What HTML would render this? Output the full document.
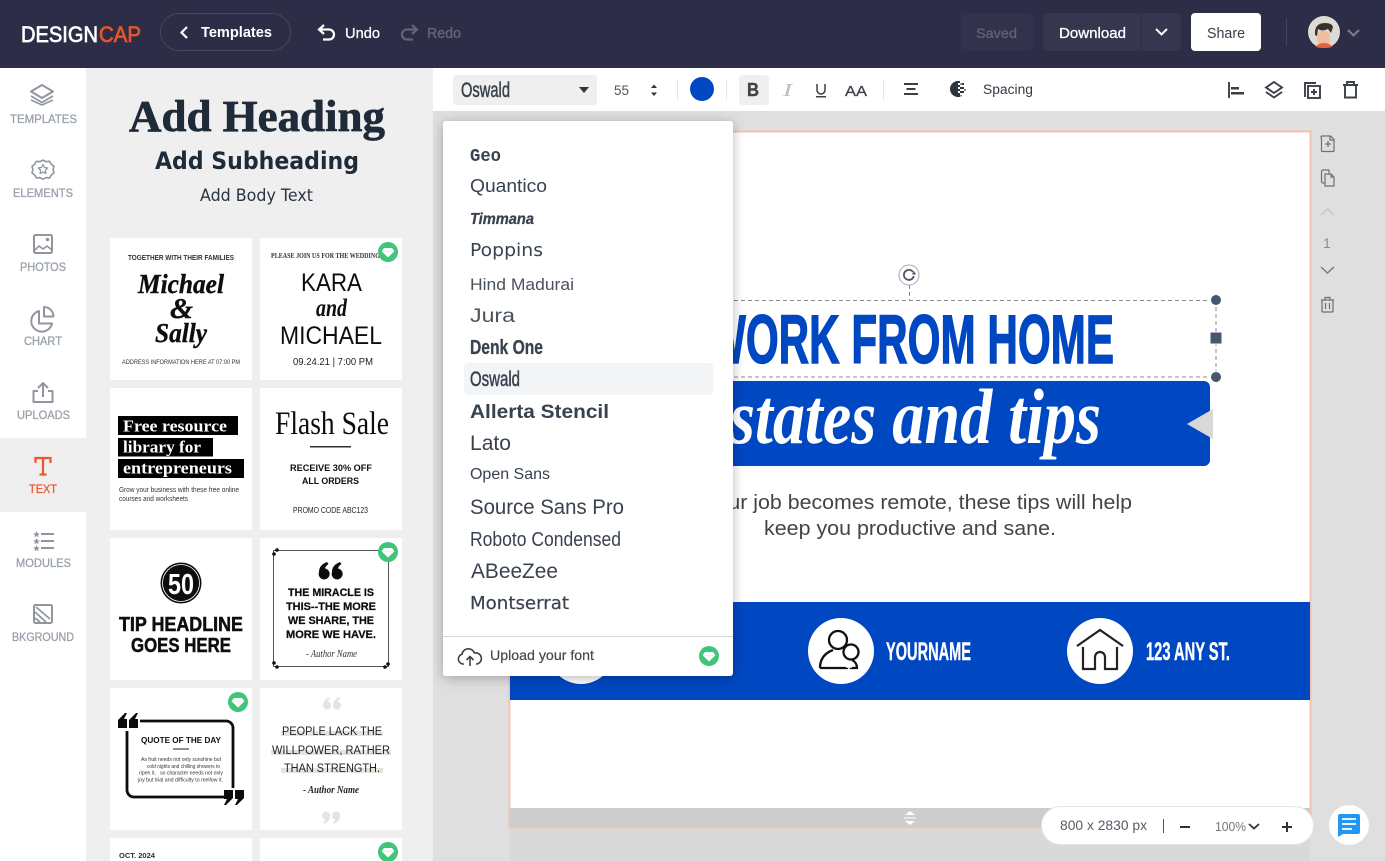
<!DOCTYPE html>
<html lang="en"><head><meta charset="utf-8"><title>DesignCap</title>
<style>
html,body{margin:0;padding:0;width:1385px;height:861px;overflow:hidden;background:#dfdfdf}
svg{display:block}
text{font-family:"Liberation Sans",sans-serif;white-space:pre}
.se{font-family:"Liberation Serif",serif}
.dj{font-family:"DejaVu Sans",sans-serif}
.mo{font-family:"Liberation Mono",monospace}
.nav{font-size:12px;fill:#99a1ab;stroke:#99a1ab;stroke-width:.3}
.hd{stroke-width:.3}
.ni{fill:none;stroke:#91969e;stroke-width:2;stroke-linejoin:round}
.ti{fill:none;stroke:#3b3f47;stroke-width:1.900}
.si{fill:none;stroke:#6d7078;stroke-width:1.200}
.f{fill:#39424f}
</style></head><body>
<svg width="1385" height="861" viewBox="0 0 1385 861" xmlns="http://www.w3.org/2000/svg">
<defs>
<filter id="sh" x="-10%" y="-10%" width="120%" height="120%"><feDropShadow dx="0" dy="2" stdDeviation="6" flood-color="#000" flood-opacity=".28"/></filter>
<filter id="bl" x="0" y="0" width="100%" height="100%"><feGaussianBlur stdDeviation=".3"/></filter>
<g id="gem"><circle r="10" fill="#3fc57a"/><path d="M-4-4H4L6.500-.8 0 5.500-6.500-.8Z" fill="#fff"/><path d="M-6-.8H6" stroke="#c5eed7" stroke-width=".6"/></g>
</defs>

<!-- workspace -->
<rect x="433" y="111" width="952" height="750" fill="#dfdfdf"/>
<rect x="510" y="827" width="800" height="34" fill="#d9d9d9"/>

<!-- header -->
<rect width="1385" height="68" fill="#2e2d47"/>
<text x="21" y="42" font-size="22" fill="#fff" stroke="#fff" stroke-width=".7" textLength="77" lengthAdjust="spacingAndGlyphs">DESIGN</text>
<text x="99" y="42" font-size="22" fill="#e9552b" stroke="#e9552b" stroke-width=".7" textLength="42" lengthAdjust="spacingAndGlyphs">CAP</text>
<rect x="160.500" y="13.500" width="130" height="37" rx="18.500" fill="none" stroke="#47475f"/>
<path d="M187 27l-5.500 5.500 5.500 5.500" fill="none" stroke="#fff" stroke-width="2.200"/>
<text x="201" y="37" font-size="14.500" font-weight="700" fill="#fff" textLength="71" lengthAdjust="spacingAndGlyphs">Templates</text>
<path d="M324 25l-5 4.500 5 4.500M319 29.500h10a5 5 0 0 1 0 10h-6" fill="none" stroke="#fff" stroke-width="2.200"/>
<text class="hd" x="345" y="38" font-size="15" fill="#fff" stroke="#fff" textLength="35" lengthAdjust="spacingAndGlyphs">Undo</text>
<path d="M412 25l5 4.500-5 4.500M417 29.500h-10a5 5 0 0 0 0 10h6" fill="none" stroke="#62627a" stroke-width="2.200"/>
<text class="hd" x="427" y="38" font-size="15" fill="#666679" stroke="#666679" textLength="34" lengthAdjust="spacingAndGlyphs">Redo</text>
<rect x="961" y="13" width="72" height="38" rx="4" fill="#33324c"/>
<text class="hd" x="976" y="38" font-size="14" fill="#62627a" stroke="#62627a" textLength="41" lengthAdjust="spacingAndGlyphs">Saved</text>
<rect x="1043" y="13" width="138" height="38" rx="4" fill="#37364f"/>
<rect x="1141" y="13" width="1" height="38" fill="#2e2d47"/>
<text class="hd" x="1059" y="38" font-size="14.500" fill="#fff" stroke="#fff" textLength="67" lengthAdjust="spacingAndGlyphs">Download</text>
<path d="M1156 29l5.500 5.500 5.500-5.500" fill="none" stroke="#fff" stroke-width="2"/>
<rect x="1191" y="13" width="70" height="38" rx="4" fill="#fff"/>
<text x="1207" y="38" font-size="14.500" fill="#3b3c4a" textLength="38" lengthAdjust="spacingAndGlyphs">Share</text>
<rect x="1286" y="18" width="1" height="28" fill="#44445e"/>
<circle cx="1324" cy="32" r="16" fill="#dcdbd5"/>
<path d="M1317 39q1 7 7 7 5 0 6-7 0-9-7-8-7 0-6 8z" fill="#efc0a0"/>
<path d="M1315 35q-1-12 10-12 7 0 8 4l-2 6-3-4q-6 3-10 0l-1 7z" fill="#3a302c"/>
<path d="M1316 47q2-4 8-4 6 0 8 4-3 1-8 1-5 0-8-1z" fill="#e8613a"/>
<path d="M1348 30l5.500 5.500 5.500-5.500" fill="none" stroke="#7e7e90" stroke-width="2"/>

<!-- left nav -->
<rect y="68" width="86" height="793" fill="#fff"/>
<rect y="438" width="86" height="74" fill="#efefef"/>
<g class="ni"><path d="M42 85l11 6.500-11 6.500-11-6.500z"/><path d="M31 96l11 6.500 11-6.500M31 100l11 5 11-5" stroke-width="1.600"/></g>
<text class="nav" x="10" y="123" textLength="67" lengthAdjust="spacingAndGlyphs">TEMPLATES</text>
<g class="ni"><path d="M43 159l3.500 1.800 3.800-.5 1.900 3.300 3 2.400-1 3.600 1 3.600-3 2.400-1.900 3.300-3.800-.5-3.500 1.800-3.500-1.800-3.800.5-1.900-3.300-3-2.400 1-3.600-1-3.600 3-2.400 1.900-3.300 3.800.5z" stroke-width="1.800" transform="translate(4.300 17) scale(.9)"/><path d="M43 164.500l1.500 3 3.300.4-2.400 2.300.6 3.300-3-1.600-3 1.600.6-3.300-2.400-2.300 3.300-.4z" stroke-width="1.300"/></g>
<text class="nav" x="13" y="197" textLength="60" lengthAdjust="spacingAndGlyphs">ELEMENTS</text>
<g class="ni"><rect x="34" y="235" width="18" height="18" rx="1.500"/><path d="M34 251l5-5 4 3 4-3 5 4" stroke-width="1.600"/><circle cx="47.500" cy="239.500" r=".8" fill="#91969e"/></g>
<text class="nav" x="20" y="271" textLength="46" lengthAdjust="spacingAndGlyphs">PHOTOS</text>
<g class="ni" stroke-width="2.200"><path d="M39 311a10.500 10.500 0 1 0 13 12.500H39z"/><path d="M44 307v9.500h9.500A9.500 9.500 0 0 0 44 307z"/></g>
<text class="nav" x="24" y="345" textLength="38" lengthAdjust="spacingAndGlyphs">CHART</text>
<g class="ni"><path d="M38 391h-4.500v11h19v-11H48"/><path d="M43 397v-14M38 388l5-5 5 5"/></g>
<text class="nav" x="17" y="419" textLength="53" lengthAdjust="spacingAndGlyphs">UPLOADS</text>
<path d="M35.500 463v-5h15v5M43 458v16M39.500 474.500h7" fill="none" stroke="#f0562d" stroke-width="2.200"/>
<text class="nav" style="fill:#f0562d;stroke:#f0562d" x="29" y="493" textLength="28" lengthAdjust="spacingAndGlyphs">TEXT</text>
<path d="M41 534h13M41 541h13M41 548h13" stroke="#91969e" stroke-width="2" fill="none"/>
<path d="M36.500 531l1 2.300 2.300.2-1.800 1.500.6 2.300-2.100-1.300-2.100 1.300.6-2.300-1.800-1.500 2.300-.2zM36.500 538l1 2.300 2.300.2-1.800 1.500.6 2.300-2.100-1.300-2.100 1.300.6-2.300-1.800-1.500 2.300-.2zM36.500 545l1 2.300 2.300.2-1.800 1.500.6 2.300-2.100-1.300-2.100 1.300.6-2.300-1.800-1.500 2.300-.2z" fill="#91969e"/>
<text class="nav" x="16" y="567" textLength="55" lengthAdjust="spacingAndGlyphs">MODULES</text>
<g class="ni"><rect x="34" y="605" width="18" height="18" rx="1.500"/><path d="M36 607l14 12M35 612l11 10M35 618l5 4" stroke-width="1.800"/></g>
<text class="nav" x="12" y="641" textLength="62" lengthAdjust="spacingAndGlyphs">BKGROUND</text>

<!-- panel -->
<rect x="86" y="68" width="347" height="793" fill="#efefef"/>
<text class="se" x="129" y="131" font-size="44" font-weight="700" fill="#1f2b38" stroke="#1f2b38" stroke-width=".7" textLength="256" lengthAdjust="spacingAndGlyphs">Add Heading</text>
<text class="dj" x="155" y="169" font-size="24" font-weight="700" fill="#1f2b38" textLength="204" lengthAdjust="spacingAndGlyphs">Add Subheading</text>
<text class="dj" x="200" y="201" font-size="16.500" fill="#2a3441" textLength="113" lengthAdjust="spacingAndGlyphs">Add Body Text</text>

<!-- thumbs -->
<g fill="#fff"><rect x="110" y="238" width="142" height="142"/><rect x="260" y="238" width="142" height="142"/><rect x="110" y="388" width="142" height="142"/><rect x="260" y="388" width="142" height="142"/><rect x="110" y="538" width="142" height="142"/><rect x="260" y="538" width="142" height="142"/><rect x="110" y="688" width="142" height="142"/><rect x="260" y="688" width="142" height="142"/><rect x="110" y="838" width="142" height="23"/><rect x="260" y="838" width="142" height="23"/></g>
<g fill="#111" filter="url(#bl)">
<text x="128" y="260" font-size="7.500" font-weight="700" fill="#333" textLength="106" lengthAdjust="spacingAndGlyphs">TOGETHER WITH THEIR FAMILIES</text>
<text class="se" x="138" y="293" font-size="27" font-weight="700" font-style="italic" stroke="#111" stroke-width=".4" textLength="86" lengthAdjust="spacingAndGlyphs">Michael</text>
<text class="se" x="170" y="318" font-size="29" font-weight="700" font-style="italic" stroke="#111" stroke-width=".4" textLength="23" lengthAdjust="spacingAndGlyphs">&amp;</text>
<text class="se" x="155" y="342" font-size="27" font-weight="700" font-style="italic" stroke="#111" stroke-width=".4" textLength="52" lengthAdjust="spacingAndGlyphs">Sally</text>
<text x="122" y="364" font-size="6.500" fill="#333" textLength="118" lengthAdjust="spacingAndGlyphs">ADDRESS INFORMATION HERE AT 07:00 PM</text>
<text class="se" x="271" y="258" font-size="7.500" font-weight="700" fill="#333" textLength="109" lengthAdjust="spacingAndGlyphs">PLEASE JOIN US FOR THE WEDDING</text>
<text x="301" y="291" font-size="25" textLength="61" lengthAdjust="spacingAndGlyphs">KARA</text>
<text class="se" x="316" y="316" font-size="25" font-weight="700" font-style="italic" textLength="31" lengthAdjust="spacingAndGlyphs">and</text>
<text x="280" y="344" font-size="25" textLength="102" lengthAdjust="spacingAndGlyphs">MICHAEL</text>
<text x="293" y="365" font-size="10.500" fill="#222" textLength="80" lengthAdjust="spacingAndGlyphs">09.24.21 | 7:00 PM</text>
<rect x="118" y="416" width="120" height="19" fill="#000"/><rect x="118" y="438" width="95" height="18.500" fill="#000"/><rect x="118" y="459" width="126" height="19" fill="#000"/>
<g fill="#fff"><text class="se" x="123" y="431.500" font-size="17" font-weight="700" textLength="104" lengthAdjust="spacingAndGlyphs">Free resource</text>
<text class="se" x="123" y="452.500" font-size="17" font-weight="700" textLength="78" lengthAdjust="spacingAndGlyphs">library for</text>
<text class="se" x="123" y="473.500" font-size="17" font-weight="700" textLength="109" lengthAdjust="spacingAndGlyphs">entrepreneurs</text></g>
<text x="119" y="492" font-size="7" fill="#333" textLength="120" lengthAdjust="spacingAndGlyphs">Grow your business with these free online</text>
<text x="119" y="501" font-size="7" fill="#333" textLength="69" lengthAdjust="spacingAndGlyphs">courses and worksheets</text>
<text class="se" x="275" y="434" font-size="33" textLength="114" lengthAdjust="spacingAndGlyphs">Flash Sale</text>
<rect x="310" y="446" width="41" height="1.500" fill="#333"/>
<text x="290" y="471" font-size="9.500" font-weight="700" textLength="82" lengthAdjust="spacingAndGlyphs">RECEIVE 30% OFF</text>
<text x="302" y="484" font-size="9.500" font-weight="700" textLength="57" lengthAdjust="spacingAndGlyphs">ALL ORDERS</text>
<text x="293" y="513" font-size="8.500" fill="#222" textLength="75" lengthAdjust="spacingAndGlyphs">PROMO CODE ABC123</text>
<circle cx="181" cy="583" r="20.500"/><circle cx="181" cy="583" r="18.500" fill="none" stroke="#fff" stroke-width=".8"/>
<text x="168" y="594" font-size="29" font-weight="700" fill="#fff" textLength="26" lengthAdjust="spacingAndGlyphs">50</text>
<text x="119" y="631" font-size="20" font-weight="700" stroke="#111" stroke-width=".5" textLength="124" lengthAdjust="spacingAndGlyphs">TIP HEADLINE</text>
<text x="131" y="652" font-size="20" font-weight="700" stroke="#111" stroke-width=".5" textLength="100" lengthAdjust="spacingAndGlyphs">GOES HERE</text>
<rect x="273.500" y="550.500" width="115" height="116" fill="none" stroke="#555" stroke-width="1"/>
<circle cx="277" cy="550" r="1.800"/><circle cx="274" cy="554" r="1.800"/><circle cx="274" cy="663" r="1.800"/><circle cx="277" cy="667" r="1.800"/><circle cx="385" cy="667" r="1.800"/><circle cx="388" cy="664" r="1.800"/>
<path d="M319 572q0-7 8-10l1.500 2q-3 2-3.500 4.500a5.500 5.500 0 1 1-6 3.500zM332 572q0-7 8-10l1.500 2q-3 2-3.500 4.500a5.500 5.500 0 1 1-6 3.500z" fill="#111"/>
<g font-weight="700" font-size="11" stroke="#111" stroke-width=".25"><text x="288" y="596" textLength="86" lengthAdjust="spacingAndGlyphs">THE MIRACLE IS</text><text x="286" y="610" textLength="90" lengthAdjust="spacingAndGlyphs">THIS--THE MORE</text><text x="288" y="624" textLength="86" lengthAdjust="spacingAndGlyphs">WE SHARE, THE</text><text x="286" y="638" textLength="90" lengthAdjust="spacingAndGlyphs">MORE WE HAVE.</text></g>
<text class="se" x="306" y="657" font-size="11" font-style="italic" fill="#333" textLength="51" lengthAdjust="spacingAndGlyphs">- Author Name</text>
<path d="M140 721h86a7 7 0 0 1 7 7v60M127 731v59a7 7 0 0 0 7 7h90" fill="none" stroke="#111" stroke-width="2.800"/>
<path d="M118 728v-8l7-7h2l-3 6h3v9zM129 728v-8l7-7h2l-3 6h3v9zM224 790h9v8l-7 7h-2l3-6h-3zM235 790h9v8l-7 7h-2l3-6h-3z" fill="#111"/>
<text x="141" y="743" font-size="8" font-weight="700" textLength="80" lengthAdjust="spacingAndGlyphs">QUOTE OF THE DAY</text>
<rect x="173" y="748.500" width="16" height="1" fill="#222"/>
<g font-size="5.500" fill="#333"><text x="141" y="761" textLength="80" lengthAdjust="spacingAndGlyphs">As fruit needs not only sunshine but</text><text x="147" y="768" textLength="73" lengthAdjust="spacingAndGlyphs">cold nights and chilling showers to</text><text x="139" y="774.500" textLength="84" lengthAdjust="spacingAndGlyphs">ripen it,   so character needs not only</text><text x="138" y="781.500" textLength="85" lengthAdjust="spacingAndGlyphs">joy but trial and difficulty to mellow it.</text></g>
<rect x="281" y="731" width="102" height="5" fill="#e4e4df"/><rect x="271" y="750" width="120" height="5" fill="#e4e4df"/><rect x="281" y="768" width="102" height="5" fill="#e4e4df"/>
<g font-size="11.500" fill="#222"><text x="282" y="735" textLength="100" lengthAdjust="spacingAndGlyphs">PEOPLE LACK THE</text><text x="272" y="754" textLength="118" lengthAdjust="spacingAndGlyphs">WILLPOWER, RATHER</text><text x="284" y="772" textLength="96" lengthAdjust="spacingAndGlyphs">THAN STRENGTH.</text></g>
<text class="se" x="303" y="793" font-size="11" font-style="italic" font-weight="700" fill="#222" textLength="56" lengthAdjust="spacingAndGlyphs">- Author Name</text>
<path d="M323 705q0-5 6-8l1 1.500q-2 1.500-2.500 3a4 4 0 1 1-4.500 3.500zM333 705q0-5 6-8l1 1.500q-2 1.500-2.500 3a4 4 0 1 1-4.500 3.500z" fill="#e4e4df"/>
<path d="M340 816q0 5-6 8l-1-1.500q2-1.500 2.500-3a4 4 0 1 1 4.500-3.500zM330 816q0 5-6 8l-1-1.500q2-1.500 2.500-3a4 4 0 1 1 4.500-3.500z" fill="#e4e4df"/>
<text x="119" y="858" font-size="7" font-weight="700" fill="#333" textLength="36" lengthAdjust="spacingAndGlyphs">OCT. 2024</text>
</g>
<use href="#gem" x="388" y="252"/><use href="#gem" x="388" y="552"/><use href="#gem" x="238" y="702"/><use href="#gem" x="388" y="852"/>

<!-- toolbar -->
<rect x="433" y="68" width="952" height="43" fill="#fff"/>
<rect x="453" y="75" width="144" height="30" rx="3" fill="#efefef"/>
<text x="461" y="97" font-size="21" class="f" stroke="#39424f" stroke-width=".5" textLength="49" lengthAdjust="spacingAndGlyphs">Oswald</text>
<path d="M579 87h10l-5 6z" fill="#333"/>
<text x="614" y="95" font-size="14" fill="#555" textLength="15" lengthAdjust="spacingAndGlyphs">55</text>
<path d="M654 84.500l3 3.500h-6zM654 96l3-3.500h-6z" fill="#333"/>
<rect x="677" y="80" width="1" height="20" fill="#e6e6e6"/>
<circle cx="702" cy="89" r="12" fill="#0047c2"/>
<rect x="726" y="80" width="1" height="20" fill="#e6e6e6"/>
<rect x="739" y="75" width="30" height="30" rx="4" fill="#efefef"/>
<text x="747" y="96" font-size="18" font-weight="700" fill="#3f4248" stroke="#3f4248" stroke-width=".4" textLength="12" lengthAdjust="spacingAndGlyphs">B</text>
<text class="se" x="783" y="96" font-size="18" font-style="italic" fill="#bbb" textLength="9" lengthAdjust="spacingAndGlyphs">I</text>
<path d="M817 84v6a4 4 0 0 0 8 0v-6" fill="none" stroke="#3b3f47" stroke-width="1.500"/><rect x="816" y="96" width="10" height="1.500" fill="#3b3f47"/>
<text x="845" y="96" font-size="15" fill="#3f4248" stroke="#3f4248" stroke-width=".3" textLength="22" lengthAdjust="spacingAndGlyphs">AA</text>
<rect x="883" y="80" width="1" height="20" fill="#e6e6e6"/>
<path d="M904 84h14M906.500 89h9M904 94h14" class="ti"/>
<path d="M958 81a8 8 0 0 0 0 16z" fill="#2e3440"/>
<g fill="#2e3440"><rect x="958" y="81" width="2" height="2"/><rect x="962" y="83" width="2" height="2"/><rect x="958" y="85" width="2" height="2"/><rect x="960" y="83" width="2" height="2" opacity=".5"/><rect x="962" y="87" width="2" height="2"/><rect x="958" y="89" width="2" height="2"/><rect x="964" y="89" width="2" height="2" opacity=".6"/><rect x="960" y="87" width="2" height="2"/><rect x="962" y="91" width="2" height="2"/><rect x="958" y="93" width="2" height="2"/><rect x="960" y="91" width="2" height="2"/><rect x="958" y="95" width="2" height="2"/><rect x="960" y="95" width="2" height="1.500" opacity=".6"/></g>
<text x="983" y="94" font-size="13.500" fill="#333a45" textLength="50" lengthAdjust="spacingAndGlyphs">Spacing</text>
<path d="M1229 82v16" class="ti" stroke-width="2"/><path d="M1231 87h8v2.500h-8zM1231 92h13v2.500h-13z" fill="#3b3f47"/>
<path d="M1274 82l8 5.500-8 5.500-8-5.500z" class="ti"/><path d="M1266 92l8 5.500 8-5.500" class="ti"/>
<path d="M1305 97v-14h11" class="ti"/><rect x="1308" y="86" width="12" height="12" class="ti"/><path d="M1314 89v6M1311 92h6" class="ti"/>
<path d="M1343 85h15M1347 85v-3h7v3M1345 85v12.500h11V85" class="ti"/>

<!-- canvas -->
<rect x="509.500" y="131.500" width="801" height="696" fill="#fff" stroke="#f0c2b3" stroke-width="2"/>
<rect x="510" y="602" width="800" height="98" fill="#0047c2"/>
<rect x="510" y="808" width="800" height="19" fill="#cdcdcd"/>
<path d="M910 811l5 4h-10zM910 825l5-4h-10z" fill="#fff"/><rect x="904" y="817.500" width="12" height="1" fill="#fff"/>

<text x="706" y="363" font-size="69" font-weight="700" fill="#0047c2" stroke="#0047c2" stroke-width="1.400" textLength="408" lengthAdjust="spacingAndGlyphs">WORK FROM HOME</text>
<rect x="510" y="381" width="700" height="85" rx="6" fill="#0047c2"/>
<text class="se" x="730" y="443" font-size="78" font-weight="700" font-style="italic" fill="#fff" textLength="371" lengthAdjust="spacingAndGlyphs">states and tips</text>
<path d="M1187 424l26-15v30z" fill="#d8d8d8"/>
<text x="688" y="509" font-size="20.500" fill="#444" textLength="444" lengthAdjust="spacingAndGlyphs">If your job becomes remote, these tips will help</text>
<text x="764" y="535" font-size="20.500" fill="#444" textLength="292" lengthAdjust="spacingAndGlyphs">keep you productive and sane.</text>

<circle cx="581" cy="651" r="33" fill="#fff"/>
<circle cx="841" cy="651" r="33" fill="#fff"/>
<g fill="none" stroke="#111" stroke-width="2.300"><circle cx="838" cy="640" r="9"/><path d="M820 668c0-9 5-15 13-18M820 668h38M852 660c4 2 5 5 5 8"/><circle cx="851" cy="652" r="7.500" fill="#fff"/></g>
<path d="M849 664v6M846 667h6" stroke="#fff" stroke-width="1.500"/>
<text x="886" y="660" font-size="25" font-weight="700" fill="#fff" stroke="#fff" stroke-width=".4" textLength="85" lengthAdjust="spacingAndGlyphs">YOURNAME</text>
<circle cx="1100" cy="651" r="33" fill="#fff"/>
<path d="M1077 646l23-16 23 16M1083 647v22h12v-12a5 5 0 0 1 10 0v12h12v-22" fill="none" stroke="#222" stroke-width="2.200"/>
<text x="1146" y="660" font-size="25" font-weight="700" fill="#fff" stroke="#fff" stroke-width=".4" textLength="84" lengthAdjust="spacingAndGlyphs">123 ANY ST.</text>

<!-- selection -->
<g fill="none" stroke="#8a8a8a" stroke-dasharray="4 3"><path d="M510 300.500H1216M510 377H1216M1216 300V377M909.500 285V300"/></g>
<circle cx="909" cy="275" r="10" fill="#fff" stroke="#aaa"/>
<path d="M913 272a5 5 0 1 0 .8 4" fill="none" stroke="#47566f" stroke-width="1.800"/><path d="M912 274.500h4l-2-3.500z" fill="#47566f"/>
<circle cx="1216" cy="300" r="5.500" fill="#47566f" stroke="#fff"/><circle cx="1216" cy="377" r="5.500" fill="#47566f" stroke="#fff"/>
<rect x="1210" y="332" width="12" height="12" fill="#47566f" stroke="#fff"/>

<!-- side tools -->
<path d="M1321.500 138.500v12a1 1 0 0 0 1 1h10.500a1 1 0 0 0 1-1v-11l-3.500-3.500h-8.500a1 1 0 0 0-1 1zM1330 136v4h4M1328 141v6M1325 144h6" class="si"/>
<path d="M1325 174h6l3 3v9h-9zM1331 174v3h3M1325 183h-2a1.500 1.500 0 0 1-1.500-1.500v-10a1.500 1.500 0 0 1 1.500-1.500h6v4" class="si"/>
<path d="M1321 215l6.500-6 6.500 6" fill="none" stroke="#c3c3c6" stroke-width="1.200"/>
<text x="1323" y="248" font-size="14" fill="#8a8d96">1</text>
<path d="M1321 267l6.500 6 6.500-6" class="si"/>
<path d="M1322 300v11a1 1 0 0 0 1 1h9a1 1 0 0 0 1-1v-11zM1321 300h13M1325 300v-2.500h5v2.500M1325.500 303v6M1329.500 303v6" class="si"/>

<!-- dropdown -->
<rect x="443" y="121" width="290" height="555" rx="3" fill="#fff" filter="url(#sh)"/>
<rect x="464" y="363" width="249" height="32" rx="4" fill="#f3f4f6"/>
<g class="f">
<text class="mo" x="470" y="161" font-size="18" font-weight="700" textLength="31" lengthAdjust="spacingAndGlyphs">Geo</text>
<text x="470" y="192" font-size="18.500" textLength="77" lengthAdjust="spacingAndGlyphs">Quantico</text>
<text x="470" y="224" font-size="16" font-weight="700" font-style="italic" stroke="#39424f" stroke-width=".3" textLength="64" lengthAdjust="spacingAndGlyphs">Timmana</text>
<text class="dj" x="470" y="256" font-size="18" textLength="73" lengthAdjust="spacingAndGlyphs">Poppins</text>
<text x="470" y="290" font-size="17" textLength="104" lengthAdjust="spacingAndGlyphs" style="fill:#4a525e">Hind Madurai</text>
<text x="470" y="322" font-size="19" textLength="45" lengthAdjust="spacingAndGlyphs" style="fill:#4a525e">Jura</text>
<text x="470" y="354" font-size="20" font-weight="700" stroke="#39424f" stroke-width=".3" textLength="73" lengthAdjust="spacingAndGlyphs">Denk One</text>
<text x="470" y="386" font-size="21" textLength="50" lengthAdjust="spacingAndGlyphs" stroke="#39424f" stroke-width=".5">Oswald</text>
<text x="470" y="418" font-size="19" font-weight="700" textLength="139" lengthAdjust="spacingAndGlyphs">Allerta Stencil</text>
<text x="470" y="450" font-size="21" textLength="41" lengthAdjust="spacingAndGlyphs">Lato</text>
<text x="470" y="479" font-size="16" textLength="80" lengthAdjust="spacingAndGlyphs">Open Sans</text>
<text x="470" y="514" font-size="21" textLength="154" lengthAdjust="spacingAndGlyphs">Source Sans Pro</text>
<text x="470" y="546" font-size="20" textLength="151" lengthAdjust="spacingAndGlyphs">Roboto Condensed</text>
<text x="471" y="578" font-size="21" textLength="87" lengthAdjust="spacingAndGlyphs">ABeeZee</text>
<text class="dj" x="470" y="609" font-size="17.500" stroke="#39424f" stroke-width=".2" textLength="99" lengthAdjust="spacingAndGlyphs">Montserrat</text>
</g>
<rect x="443" y="636" width="290" height="1" fill="#d6d6de"/>
<path d="M464 664h-1a5 5 0 0 1-1-9.800 6.500 6.500 0 0 1 12.500-1.200 5.500 5.500 0 0 1 2.500 11h-1M470 666v-9M466.500 660l3.500-3.500 3.500 3.500" fill="none" stroke="#3a424e" stroke-width="1.600"/>
<text x="490" y="660" font-size="14" fill="#3f4752" stroke="#3f4752" stroke-width=".2" textLength="104" lengthAdjust="spacingAndGlyphs">Upload your font</text>
<use href="#gem" x="709" y="656"/>

<!-- zoom -->
<rect x="1041.500" y="806.500" width="272" height="38" rx="19" fill="#fff" stroke="#e6e6e6"/>
<text x="1060" y="830" font-size="14" fill="#555b66" textLength="87" lengthAdjust="spacingAndGlyphs">800 x 2830 px</text>
<rect x="1163" y="819" width="1" height="14" fill="#555"/>
<rect x="1180" y="826" width="10" height="2" fill="#333"/>
<text x="1215" y="831" font-size="13" fill="#777" textLength="31" lengthAdjust="spacingAndGlyphs">100%</text>
<path d="M1249 824l5 4.500 5-4.500" fill="none" stroke="#333" stroke-width="1.800"/>
<path d="M1282 827h10M1287 822v10" stroke="#333" stroke-width="2" fill="none"/>
<circle cx="1349" cy="825" r="20" fill="#fff"/>
<path d="M1338 816a2 2 0 0 1 2-2h18a2 2 0 0 1 2 2v16a2 2 0 0 1-2 2h-15l-5 3z" fill="#2196f3"/>
<path d="M1342 819h14M1342 824h14M1342 829h10" stroke="#fff" stroke-width="1.800"/>
</svg>
</body></html>
